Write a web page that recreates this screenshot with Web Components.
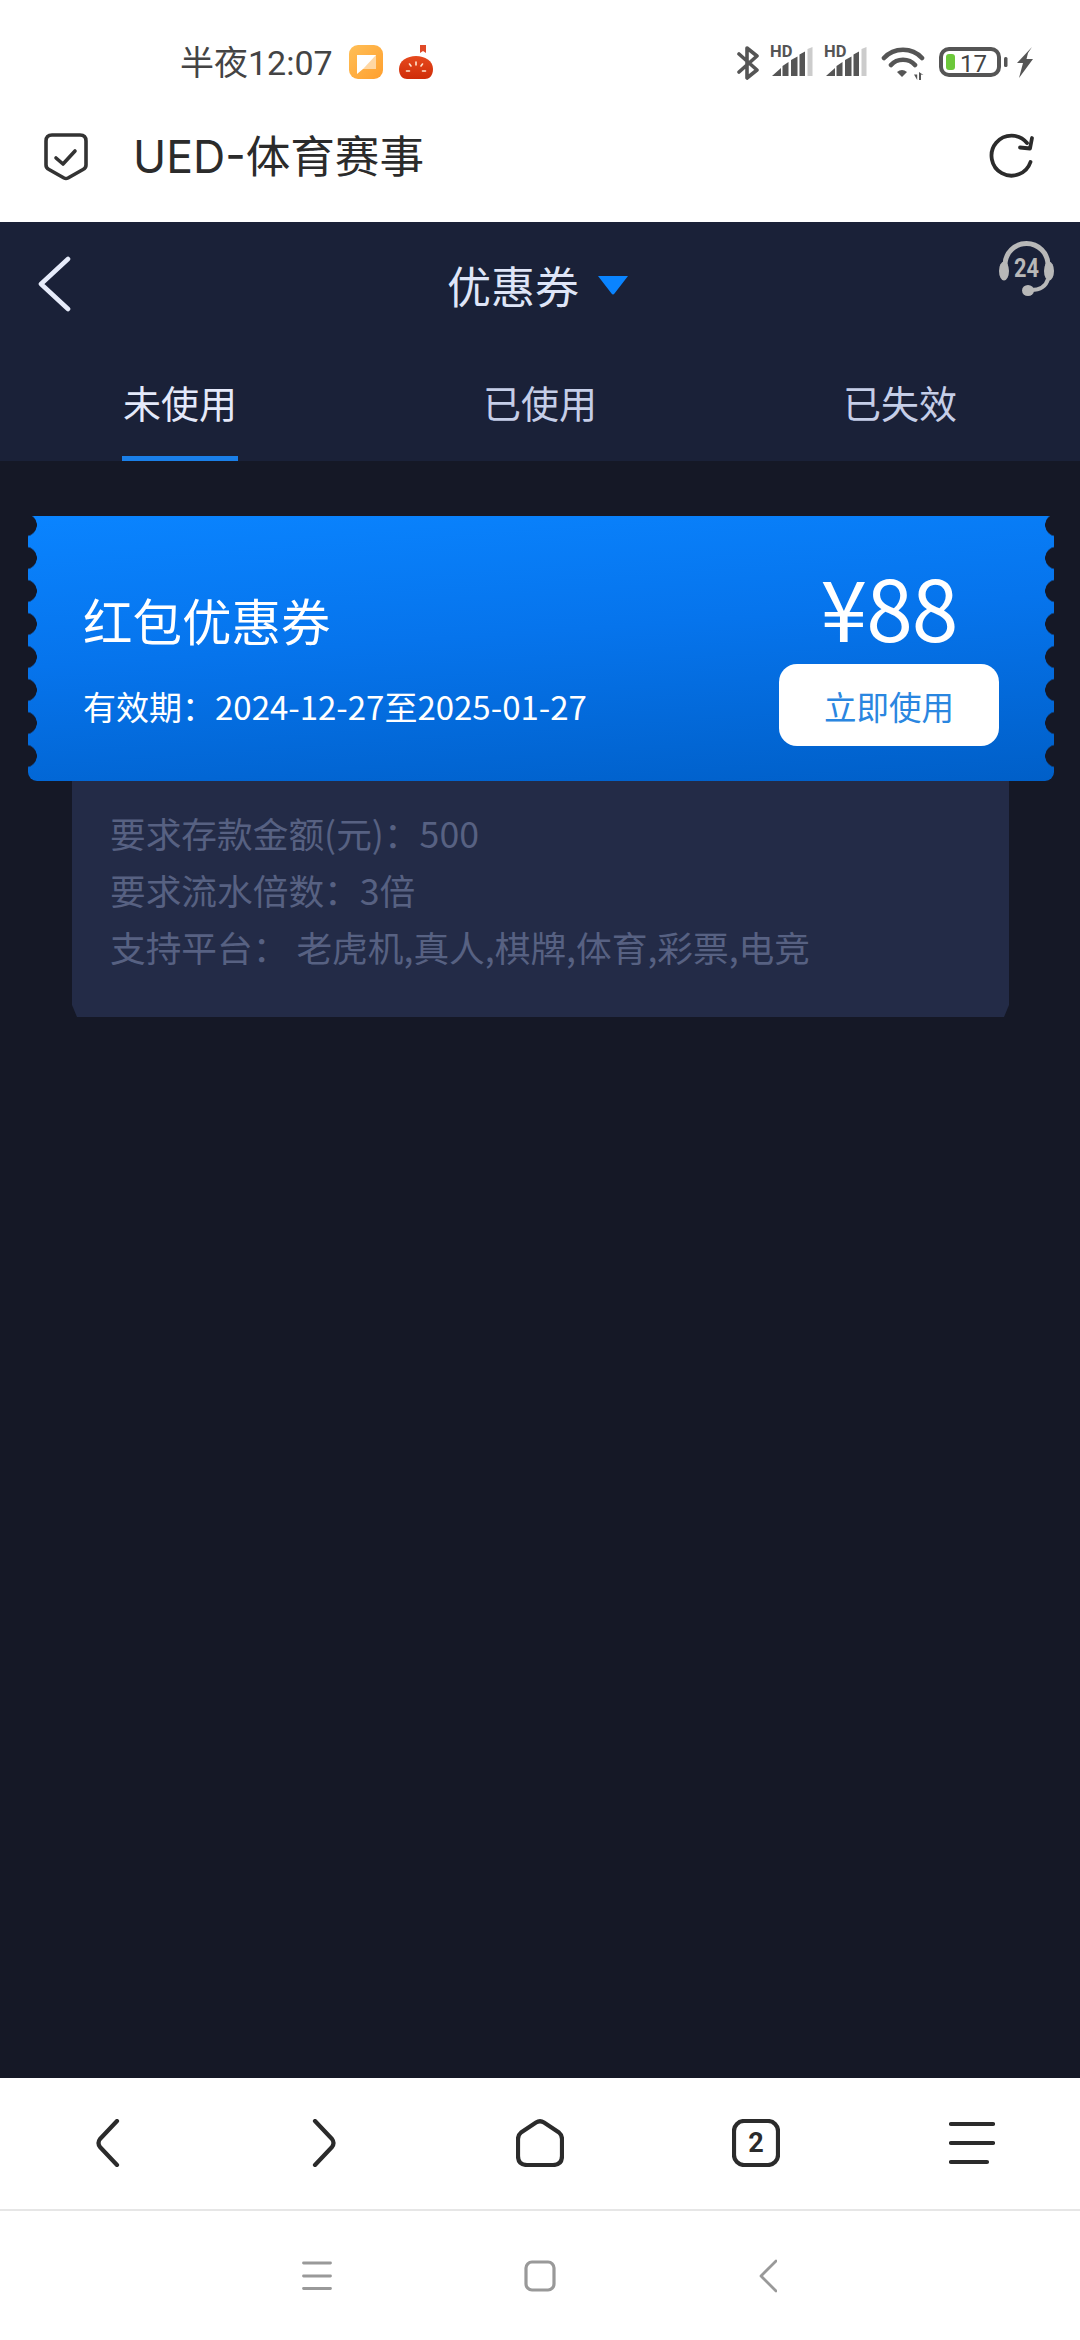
<!DOCTYPE html>
<html lang="zh">
<head>
<meta charset="utf-8">
<title>优惠券</title>
<style>
  html, body { margin: 0; padding: 0; }
  body {
    width: 1080px; height: 2340px; overflow: hidden;
    display: flex; flex-direction: column;
    background: #151826;
    font-family: "Noto Sans CJK SC", sans-serif;
  }
</style>
</head>
<body>
<status-bar></status-bar>
<browser-bar>UED-体育赛事</browser-bar>
<page-header title-text="优惠券">
  <tab-item active>未使用</tab-item>
  <tab-item>已使用</tab-item>
  <tab-item>已失效</tab-item>
</page-header>
<coupon-list>
  <coupon-card name="红包优惠券" validity="有效期：2024-12-27至2025-01-27" amount="¥88" action="立即使用">
    <div>要求存款金额(元)：500</div>
    <div>要求流水倍数：3倍</div>
    <div>支持平台： 老虎机,真人,棋牌,体育,彩票,电竞</div>
  </coupon-card>
</coupon-list>
<browser-nav></browser-nav>
<android-nav></android-nav>

<script>
function shadow(el, html) {
  el.attachShadow({ mode: 'open' }).innerHTML = html;
}
const LATIN = '"Roboto","Noto Sans CJK SC",sans-serif';

class StatusBar extends HTMLElement {
  connectedCallback() {
    const bars = `<svg class="sig" width="43" height="52" viewBox="0 -10 43 52">
        <text x="0" y="12" font-family="Roboto" font-weight="700" font-size="16.500" fill="#555">HD</text>
        <path fill="#555" d="M2 31 11 23V31ZM12.500 31V21L18.500 17V31ZM21 31V15L27.500 11.500V31ZM29.500 31V9.500L35 6.500V31Z"/>
        <path fill="#ccc" d="M37.500 31V4L42.500 2V31Z"/></svg>`;
    shadow(this, `<style>
      :host { display:flex; flex:none; height:110px; box-sizing:border-box; padding:45px 46px 0 180px; background:#fff; align-items:flex-start; }
      .time { font:400 34px/36px ${LATIN}; color:#444; width:152px; white-space:nowrap; }
      svg { display:block; flex:none; }
      .note { margin-left:17px; }
      .tomato { margin-left:16px; }
      .right { margin-left:auto; display:flex; align-items:flex-start; }
      .sig { margin:-10px 0 0 11px; }
      .wifi { margin-left:14px; }
      .batt { margin-left:14px; }
      .bolt { margin-left:8px; }
    </style>
    <span class="time">半夜12:07</span>
    <svg class="note" width="34" height="34" viewBox="0 0 34 34">
      <defs><linearGradient id="n" x1="0" y1="0" x2="1" y2="1"><stop offset="0" stop-color="#ffbf57"/><stop offset="1" stop-color="#ff9f2e"/></linearGradient></defs>
      <rect width="34" height="34" rx="9" fill="url(#n)"/>
      <path fill="#fff" d="M8 10H27V24H14L8 29Z"/>
      <path fill="#ffd7a3" d="M27 10V24H14Z"/>
    </svg>
    <svg class="tomato" width="34" height="34" viewBox="0 0 34 34">
      <defs><linearGradient id="t" x1="0" y1="0" x2="0" y2="1"><stop offset="0" stop-color="#e64a1e"/><stop offset="1" stop-color="#cf2c08"/></linearGradient></defs>
      <path fill="#e04a28" d="M21 0H27V8L24 6 21 8Z"/>
      <path fill="url(#t)" d="M0 24C0 16 8 11 17 11S34 16 34 24C34 31 30 34 26 34H8C4 34 0 31 0 24Z"/>
      <path stroke="#ffe6d0" stroke-width="1.600" stroke-linecap="round" fill="none" d="M17 17V20M10.500 19 12 21M23.500 19 22 21M7.500 26H10.500M23.500 26H26.500"/>
    </svg>
    <div class="right">
      <svg width="22" height="36" viewBox="0 0 22 36"><path fill="none" stroke="#555" stroke-width="3.600" stroke-linejoin="round" stroke-linecap="round" d="M2 9 20 25 10 33V3L20 11 2 27"/></svg>
      ${bars}
      ${bars}
      <svg class="wifi" width="44" height="36" viewBox="0 0 44 36">
        <path fill="none" stroke="#555" stroke-width="4.600" stroke-linecap="round" d="M3 13C13 2 31 2 41 13M10 20C16 13 28 13 34 20"/>
        <path fill="#555" d="M16 27Q21 23 26 27L21 32Z"/>
        <path fill="#555" d="M33 29.500H36.200V35ZM38 27V35H40V29.500L42.500 30Z"/>
      </svg>
      <svg class="batt" width="69" height="36" viewBox="0 0 69 36">
        <rect x="2" y="4" width="58" height="26" rx="8" fill="none" stroke="#555" stroke-width="4"/>
        <rect x="7" y="9" width="9" height="16" rx="3" fill="#6cc83a"/>
        <text x="21" y="27" font-family="Roboto" font-size="24" fill="#444">17</text>
        <rect x="65" y="12" width="3.500" height="10" rx="1.500" fill="#555"/>
      </svg>
      <svg class="bolt" width="18" height="36" viewBox="0 0 18 36">
        <path fill="#555" d="M16 2 1 18H7L3 33 17 14H10.500L12 8Z"/>
      </svg>
    </div>`);
  }
}

class BrowserBar extends HTMLElement {
  connectedCallback() {
    shadow(this, `<style>
      :host { display:flex; flex:none; height:112px; box-sizing:border-box; padding:23px 45px 0 44px; background:#fff; align-items:flex-start; }
      svg { display:block; flex:none; }
      .title { margin-left:45px; font:400 44.600px/48px "Inter","Noto Sans CJK SC",sans-serif; color:#2b2b2b; white-space:nowrap; }
      .refresh { margin-left:auto; }
    </style>
    <svg width="44" height="48" viewBox="0 0 44 48"><g fill="none" stroke="#333" stroke-width="3.600" stroke-linejoin="round" stroke-linecap="round">
      <path d="M8 2H36Q42 2 42 8V32Q42 35 39 36.500L24 45Q22 46 20 45L5 36.500Q2 35 2 32V8Q2 2 8 2Z"/>
      <path d="M12 25 19 31 31 18"/></g></svg>
    <span class="title"><slot></slot></span>
    <svg class="refresh" width="46" height="46" viewBox="0 0 46 46"><g fill="none" stroke="#2b2b2b" stroke-width="3.800" stroke-linecap="round" stroke-linejoin="round">
      <path d="M41.500 29A20 20 0 1 1 38 10"/>
      <path d="M43 5 41 15.500 31 14.500"/></g></svg>`);
  }
}

class TabItem extends HTMLElement {
  connectedCallback() {
    const on = this.hasAttribute('active');
    shadow(this, `<style>
      :host { display:flex; justify-content:center; flex:1; }
      .l { min-width:116px; box-sizing:border-box; text-align:center; padding:2px 0; font-size:38px; line-height:104px; color:${on ? '#e4e9fa' : '#c5cee8'}; border-bottom:5px solid ${on ? '#1a7fe8' : 'transparent'}; }
    </style><div class="l"><slot></slot></div>`);
  }
}

class PageHeader extends HTMLElement {
  connectedCallback() {
    shadow(this, `<style>
      :host { display:block; flex:none; background:#1a2138; }
      .row { display:grid; grid-template-columns:1fr auto 1fr; height:126px; }
      .back { margin:34px 0 0 36px; display:block; }
      .mid { display:flex; align-items:center; gap:19px; margin-right:5px; }
      .t { font-size:44px; line-height:60px; color:#dfe5f7; }
      .hs { justify-self:end; margin:19px 26px 0 0; display:block; }
      .tabs { display:flex; height:113px; }
    </style>
    <div class="row">
      <svg class="back" width="36" height="56" viewBox="0 0 36 56"><path fill="none" stroke="#e6ebfa" stroke-width="4.600" stroke-linecap="round" stroke-linejoin="round" d="M32 3 5 28 32 53"/></svg>
      <div class="mid"><span class="t">${this.getAttribute('title-text')}</span>
        <svg width="30" height="20" viewBox="0 0 30 20"><path fill="#0a84ff" d="M0 1H30L16.500 18.500Q15 20.500 13.500 18.500Z"/></svg></div>
      <svg class="hs" width="55" height="55" viewBox="0 0 55 55">
        <path fill="none" stroke="#b8b8b8" stroke-width="5" d="M6 29V24A21.500 21.500 0 0 1 49 24V29"/>
        <ellipse cx="5" cy="30" rx="5" ry="9.500" fill="#b8b8b8"/><ellipse cx="50" cy="30" rx="5" ry="9.500" fill="#b8b8b8"/>
        <path fill="none" stroke="#b8b8b8" stroke-width="4" d="M49 38Q46 49 32 49"/>
        <ellipse cx="29" cy="49.500" rx="6" ry="5.500" fill="#b8b8b8"/>
        <text x="15" y="36" font-family="Roboto" font-weight="700" font-size="25" fill="#b8b8b8" textLength="25" lengthAdjust="spacingAndGlyphs">24</text>
      </svg>
    </div>
    <div class="tabs"><slot></slot></div>`);
  }
}

class CouponList extends HTMLElement {
  connectedCallback() {
    shadow(this, `<style>
      :host { display:block; flex:1; min-height:0; background:#151826; box-sizing:border-box; padding:55px 26px 0 28px; }
    </style><slot></slot>`);
  }
}

class CouponCard extends HTMLElement {
  connectedCallback() {
    const a = n => this.getAttribute(n);
    shadow(this, `<style>
      :host { display:block; color:#fff; }
      .card { position:relative; height:265px; display:flex; justify-content:space-between; box-sizing:border-box; padding:0 55px 0 55px; border-radius:3px 3px 9px 9px;
        background:linear-gradient(176deg,#0a84ff 0%,#0674ec 45%,#005fc8 100%); }
      .card::before, .card::after { content:""; position:absolute; top:0; width:9px; height:256px; background-size:9px 33px; background-repeat:repeat-y; background-position:0 -7.500px; }
      .card::before { left:0; background-image:radial-gradient(circle 11.500px at -2.500px 16.500px,#151826 96%,transparent 100%); }
      .card::after { right:0; background-image:radial-gradient(circle 11.500px at 11.500px 16.500px,#151826 96%,transparent 100%); }
      .name { margin-top:70px; font-size:49.500px; line-height:68px; }
      .val { margin-top:29px; font-size:33px; line-height:46px; white-space:nowrap; }
      .right { display:flex; flex-direction:column; align-items:center; width:220px; }
      .amt { margin-top:40px; font:400 84px/100px "Noto Sans CJK SC",sans-serif; letter-spacing:-1px; }
      .btn { margin-top:8px; width:220px; height:82px; border-radius:18px; background:#fff; color:#2a86e0; font-size:32.500px; line-height:84px; text-align:center; }
      .detail { margin:0 45px 0 44px; height:236px; box-sizing:border-box; padding:23px 38px 0; background:#232b47; color:#576182; font-size:35.700px; line-height:57px; white-space:nowrap;
        clip-path:polygon(0 0,100% 0,100% calc(100% - 12px),calc(100% - 5px) 100%,5px 100%,0 calc(100% - 12px)); }
    </style>
    <div class="card">
      <div><div class="name">${a('name')}</div><div class="val">${a('validity')}</div></div>
      <div class="right"><div class="amt">${a('amount')}</div><div class="btn">${a('action')}</div></div>
    </div>
    <div class="detail"><slot></slot></div>`);
  }
}

class BrowserNav extends HTMLElement {
  connectedCallback() {
    const s = 'fill="none" stroke="#2b2b2b" stroke-width="4.200" stroke-linecap="round" stroke-linejoin="round"';
    shadow(this, `<style>
      :host { display:grid; flex:none; grid-template-columns:repeat(5,216px); height:133px; box-sizing:border-box; padding-bottom:1px; background:#fff; border-bottom:2px solid #e6e6e6; align-items:center; justify-items:center; }
      svg { display:block; }
    </style>
    <svg width="24" height="48" viewBox="0 0 24 48"><path ${s} d="M21 2 4 20Q1 24 4 28L21 46"/></svg>
    <svg width="24" height="48" viewBox="0 0 24 48"><path ${s} d="M3 2 20 20Q23 24 20 28L3 46"/></svg>
    <svg width="48" height="48" viewBox="0 0 48 48"><path ${s} d="M20 3.500Q24 1 28 3.500L43 13.500Q46 16 46 20V37Q46 46 37 46H11Q2 46 2 37V20Q2 16 5 13.500Z"/></svg>
    <svg width="48" height="48" viewBox="0 0 48 48"><rect x="2" y="2" width="44" height="44" rx="10" ${s}/>
      <text x="24" y="33" text-anchor="middle" font-family="Roboto" font-weight="700" font-size="27" fill="#2b2b2b">2</text></svg>
    <svg width="46" height="48" viewBox="0 0 46 48"><path ${s} d="M2 5H44M2 24H44M2 43H38"/></svg>`);
  }
}

class AndroidNav extends HTMLElement {
  connectedCallback() {
    const s = 'fill="none" stroke="#999" stroke-linecap="round" stroke-linejoin="round"';
    shadow(this, `<style>
      :host { display:flex; flex:none; height:129px; box-sizing:border-box; padding-left:302px; background:#fff; align-items:center; }
      svg { display:block; flex:none; }
      .sq { margin-left:192px; }
      .bk { margin-left:203px; }
    </style>
    <svg width="30" height="30" viewBox="0 0 30 30"><path ${s} stroke-width="2.800" d="M1.500 2H28.500M1.500 15H28.500M1.500 27.500H28.500"/></svg>
    <svg class="sq" width="32" height="32" viewBox="0 0 32 32"><rect x="2" y="2" width="28" height="28" rx="6" ${s} stroke-width="3.200"/></svg>
    <svg class="bk" width="18" height="34" viewBox="0 0 18 34"><path ${s} stroke-linecap="butt" stroke-width="2.800" d="M17 2 2 17 17 32"/></svg>`);
  }
}

customElements.define('status-bar', StatusBar);
customElements.define('browser-bar', BrowserBar);
customElements.define('tab-item', TabItem);
customElements.define('page-header', PageHeader);
customElements.define('coupon-list', CouponList);
customElements.define('coupon-card', CouponCard);
customElements.define('browser-nav', BrowserNav);
customElements.define('android-nav', AndroidNav);
</script>
</body>
</html>
